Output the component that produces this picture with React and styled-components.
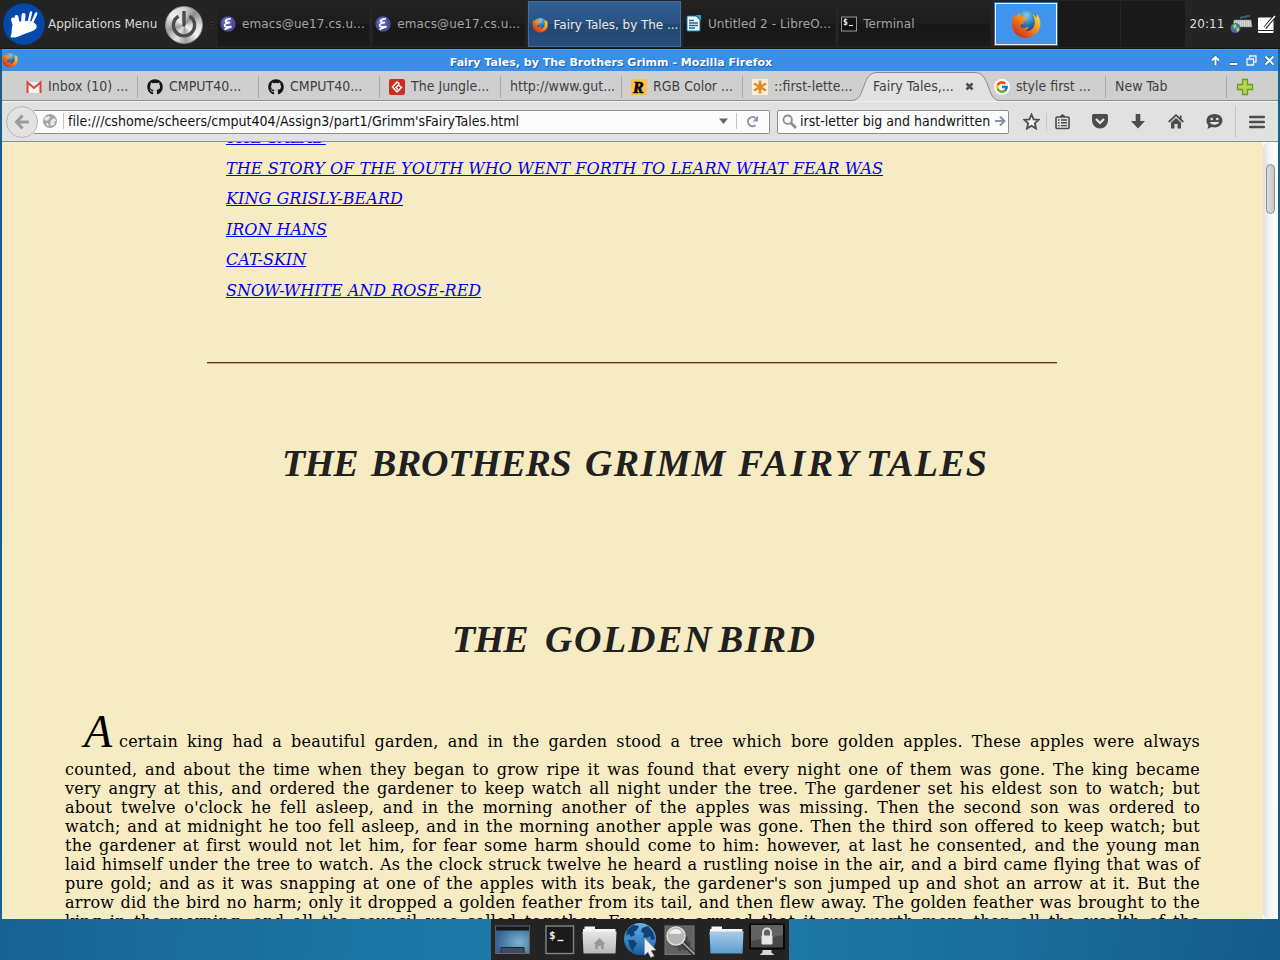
import React from 'react';
import styled, { createGlobalStyle, css } from 'styled-components';
import { FaGithub } from 'react-icons/fa';
import { FcGoogle } from 'react-icons/fc';

const Global = createGlobalStyle`
  * { box-sizing: border-box; }
  body { margin: 0; overflow: hidden; }
  svg { display: block; flex: none; }
`;

const ui = '"DejaVu Sans", sans-serif';
const uiNarrow = '"DejaVu Sans Condensed", "DejaVu Sans", sans-serif';

const Desktop = styled.div`
  width: 1280px;
  height: 960px;
  display: flex;
  flex-direction: column;
  overflow: hidden;
  background: linear-gradient(97deg, #155c8c 0%, #1d76a5 35%, #207aa8 60%, #1c719f 75%, #155b8a 100%);
`;

/* ---------- top panel ---------- */
const Panel = styled.div`
  height: 49px;
  flex: none;
  display: flex;
  align-items: center;
  background: #242424;
  border-bottom: 1px solid #141414;
  padding-left: 3px;
  font: 12px ${ui};
  color: #d8d8d8;
`;
const MenuButton = styled.div`
  display: flex;
  align-items: center;
  gap: 3px;
  width: 162px;
  white-space: nowrap;
  letter-spacing: -0.05px;
  svg { width: 42px; height: 42px; }
`;
const PowerButton = styled.div`
  width: 38px;
  height: 38px;
  border-radius: 50%;
  margin-top: 1px;
  border: 1px solid #8d8d8d;
  background: conic-gradient(#d5d5d5, #8c8c8c 12%, #dcdcdc 25%, #f4f4f4 36%, #a0a0a0 48%, #e4e4e4 58%, #9a9a9a 70%, #efefef 85%, #d5d5d5);
  display: flex;
  align-items: center;
  justify-content: center;
`;
const Grip = styled.div`
  width: 3px;
  height: 8px;
  margin: 0 4px 0 7px;
  background: repeating-linear-gradient(#161616 0 1px, #333 1px 3px);
`;
const TaskList = styled.div`
  display: flex;
  gap: 2px;
  align-self: stretch;
  padding: 1px 0;
`;
const Task = styled.div`
  width: 153.3px;
  height: 46px;
  display: flex;
  align-items: center;
  padding: 0 0 1px 2px;
  gap: 6px;
  white-space: nowrap;
  overflow: hidden;
  letter-spacing: 0.1px;
  color: #a3a3a3;
  background: linear-gradient(#222 0%, #1d1d1d 50%, #171717 50%, #1a1a1a 100%);
  border: 1px solid #202020;
  ${(p) => p.$active && css`
    color: #e6e9ec;
    padding: 1px 0 0 3px;
    letter-spacing: -0.05px;
    background: linear-gradient(#2f5f94 0%, #2a5282 50%, #24476f 50%, #294f7c 100%);
    border: 1px solid #3d6ea6;
  `}
`;
const Pager = styled.div`
  display: flex;
  align-self: stretch;
  margin-left: 4px;
  padding: 1px 0;
  gap: 1px;
`;
const Workspace = styled.div`
  width: ${(p) => p.$w || 62}px;
  height: 46px;
  background: #191919;
  display: flex;
  align-items: center;
  justify-content: center;
  ${(p) => p.$current && css`
    background: #3f94ee;
    border: 1px solid #f2f2f2;
    height: 42px;
    margin: 2px 0;
    outline: 1px solid #3a6797;
  `}
`;
const Clock = styled.div`
  width: 45px;
  padding-left: 4px;
  color: #dcdcdc;
  letter-spacing: 0.1px;
`;
const Tray = styled.div`
  display: flex;
  align-items: center;
  gap: 4px;
`;

/* ---------- window ---------- */
const Window = styled.div`
  width: 1276px;
  height: 870px;
  margin-left: 2px;
  display: flex;
  flex-direction: column;
  overflow: hidden;
  position: relative;
`;
const TitleBar = styled.div`
  height: 22px;
  flex: none;
  display: flex;
  align-items: center;
  background: #3a8ee8;
  border-top: 1px solid #4d9bef;
  > svg { margin-bottom: 2px; }
`;
const TitleText = styled.div`
  flex: 1;
  text-align: center;
  padding: 3px 0 0;
  font: bold 11px ${ui};
  color: #fff;
  text-shadow: 1px 1px 1px #1c5ea8;
  letter-spacing: 0.02px;
`;
const WindowButtons = styled.div`
  display: flex;
  width: 74px;
  gap: 5px;
  padding-left: 5px;
`;

const TabStrip = styled.div`
  height: 30px;
  flex: none;
  display: flex;
  background: #cfcfcf;
  border-bottom: 1px solid #8f8f8f;
  padding-left: 15px;
  position: relative;
`;
const TabItem = styled.div`
  width: 121px;
  height: 30px;
  display: flex;
  align-items: center;
  gap: 6px;
  padding: 1px 0 0 9px;
  font: 14px/19px ${uiNarrow};
  color: #3f3f3f;
  white-space: nowrap;
  position: relative;
  z-index: ${(p) => (p.$active ? 2 : 0)};
  background: ${(p) => (p.$line ? 'linear-gradient(#a9a9a9, #a9a9a9) right 5px / 1px 22px no-repeat' : 'none')};
`;
const TabLabel = styled.span`
  flex: 1;
`;
const CloseMark = styled.span`
  width: 20px;
  display: flex;
`;
const ActiveShape = styled.svg`
  position: absolute;
  left: 850px;
  top: 0;
  z-index: 1;
`;
const AddTab = styled.div`
  padding: 7px 0 0 9px;
`;

const NavBar = styled.div`
  height: 41px;
  flex: none;
  display: flex;
  align-items: center;
  background: #e1e1e1;
  border-top: 1px solid #f1f1f1;
  border-bottom: 1px solid #8f8f8f;
  padding-left: 4px;
`;
const BackButton = styled.div`
  width: 32px;
  height: 32px;
  border-radius: 50%;
  border: 1px solid #b4b4b4;
  background: #e2e2e2;
  display: flex;
  align-items: center;
  justify-content: center;
  flex: none;
  z-index: 1;
`;
const field = css`
  height: 24px;
  background: #fcfcfc;
  border: 1px solid #8e8e8e;
  display: flex;
  align-items: center;
  flex: none;
  font: 14px/18px ${uiNarrow};
  color: #111;
  white-space: nowrap;
`;
const UrlField = styled.div`
  ${field}
  width: 736px;
  margin-left: -4px;
  border-left: 0;
  border-radius: 0 2px 2px 0;
  padding: 0 10px 1px 9px;
`;
const Bar = styled.span`
  width: 1px;
  height: ${(p) => p.$h || 16}px;
  background: #c6c6c6;
  margin: 0 ${(p) => p.$r || 0}px 0 ${(p) => p.$l || 0}px;
  flex: none;
`;
const Address = styled.span`
  flex: 1;
  letter-spacing: 0.03px;
`;
const SearchField = styled.div`
  ${field}
  width: 232px;
  margin-left: 7px;
  border-radius: 2px;
  padding: 0 2px 1px 4px;
  gap: 3px;
`;
const SearchText = styled.span`
  flex: 1;
  min-width: 0;
`;
const Tools = styled.div`
  display: flex;
  align-items: center;
  margin-left: 14px;
`;
const ToolIcon = styled.span`
  width: 38px;
  display: flex;
  justify-content: center;
`;

/* ---------- page ---------- */
const View = styled.div`
  flex: 1;
  display: flex;
  overflow: hidden;
  background: #fff;
`;
const Page = styled.div`
  width: 1261px;
  height: 777px;
  overflow: hidden;
  background: #f7ebc4;
  font-family: "DejaVu Serif", serif;
  color: #000;
`;
const Contents = styled.div`
  margin: -19px 0 0 224px;
  display: flex;
  flex-direction: column;
  align-items: flex-start;
`;
const ContentsLink = styled.a`
  font: italic 16px/30.5px "DejaVu Serif", serif;
  letter-spacing: ${(p) => p.$ls || 0}px;
  color: #0000ee;
  text-decoration: underline;
  text-decoration-thickness: 1px;
  text-underline-offset: 1px;
  white-space: nowrap;
`;
const Rule = styled.div`
  width: 850px;
  height: 2px;
  margin: 56px 0 0 205px;
  background: #6b2f04;
  border-bottom: 1px solid #cda873;
`;
const Heading = styled.div`
  display: flex;
  margin: ${(p) => p.$top}px 0 0 ${(p) => p.$left}px;
  font: italic bold 38px/44px "Liberation Serif", serif;
  color: #212121;
`;
const Word = styled.span`
  width: ${(p) => p.$w}px;
  letter-spacing: ${(p) => p.$ls}px;
  white-space: nowrap;
`;
const Story = styled.div`
  margin: 52px 0 0 63px;
  width: 1135px;
`;
const Line = styled.div`
  font-size: 16px;
  line-height: 19px;
  height: 19px;
  letter-spacing: 0.22px;
  white-space: nowrap;
  text-align: justify;
  text-align-last: justify;
`;
const Opening = styled.div`
  display: flex;
  align-items: baseline;
  height: 47px;
  padding-left: 19px;
  ${Line} { flex: 1; }
`;
const Initial = styled.span`
  font: italic 46px/38px "Liberation Serif", serif;
  width: 35px;
`;

const ScrollTrack = styled.div`
  width: 15px;
  background: linear-gradient(90deg, #dedede, #f4f4f4 40%, #fff);
  padding: 22px 0 0 3px;
  border-radius: 6px 0 0 6px;
`;
const ScrollThumb = styled.div`
  width: 9px;
  height: 50px;
  border-radius: 5px;
  border: 1px solid #8b8b8b;
  background: linear-gradient(90deg, #dcdcdc, #c8c8c8);
`;

/* ---------- dock ---------- */
const Dock = styled.div`
  width: 298px;
  height: 41px;
  margin-left: 491px;
  flex: none;
  background: #242424;
  display: flex;
  align-items: center;
  padding: 1px 0 0 2px;
`;
const DockItem = styled.div`
  width: ${(p) => p.$w || 40}px;
  display: flex;
  justify-content: center;
`;

/* ---------- drawings ---------- */
const Firefox = ({ size = 16 }) => (
  <svg width={size} height={size} viewBox="0 0 32 32">
    <defs>
      <radialGradient id="ffBlue" cx=".5" cy=".2" r=".8"><stop offset="0" stopColor="#7fd0f5" /><stop offset=".5" stopColor="#2a72b8" /><stop offset="1" stopColor="#152a63" /></radialGradient>
      <linearGradient id="ffFire" x1="1" y1="0" x2=".1" y2="1"><stop offset="0" stopColor="#ffe95a" /><stop offset=".35" stopColor="#fba522" /><stop offset=".65" stopColor="#e8601c" /><stop offset="1" stopColor="#b9260f" /></linearGradient>
    </defs>
    <circle cx="16.5" cy="14.5" r="13" fill="url(#ffBlue)" />
    <path d="M27 5c4 4 5 9 4 14-1.600 7-8 12-15 12C7.500 31 1 24.500 1 16 1 11.500 2 8 3.500 5.500L5 8c1.500-2 3.500-3.200 5-4-.4 1.600 0 3 .7 4 2.300 0 5 .3 6.300 2-.4 1.700-2.600 2.500-3.700 3.400.3 1.200.2 2-.3 2.800-1.500-.3-3 .2-3 1.800 0 1.500 2 2.700 4 2.300 2-.4 3-1.700 4.500-1.100 1 .8-.8 3.300-3.200 4 5.700 1.200 10-3 10-8.500C25.300 11 25 8 23 5c1.800 1 3 2.500 4 4.500.5-1.500.5-3 0-4.500z" fill="url(#ffFire)" />
  </svg>
);
const Xfce = () => (
  <svg viewBox="0 0 42 42">
    <circle cx="21" cy="21" r="20.800" fill="#0548ab" />
    <path d="M10 21C14 18.500 24 17 29 19c4 1.500 6 3.500 4 6.500-3 3.500-10 4-15 7-4 2-10 3-10.500 1C9.500 30 8 25 10 21z" fill="#fff" />
    <path d="M10 16.500l2 6M13.500 14l1.500 8M20.500 12l-.5 9" stroke="#fff" strokeWidth="4" strokeLinecap="round" />
    <path d="M28 9.500L25.500 20M33.200 10.500L28.500 21" stroke="#fff" strokeWidth="2.500" strokeLinecap="round" />
  </svg>
);
const PowerGlyph = () => (
  <svg width="28" height="28" viewBox="0 0 28 28" fill="none" stroke="#4b4b4b" strokeWidth="3.400">
    <path d="M8.500 5.200a10.600 10.600 0 1 0 11 0" /><path d="M14 1v13" strokeLinecap="round" />
  </svg>
);
const Emacs = () => (
  <svg width="16" height="16" viewBox="0 0 16 16">
    <circle cx="8" cy="8" r="7.700" fill="#4c4b9e" /><circle cx="7" cy="6" r="5" fill="#7a79c5" opacity=".5" />
    <path d="M11 2.500C8 3 5 4 5.500 5.500c.3 1 2.200 1 4.500 1-2.500.5-5.500 1.300-5.500 3 0 1.500 3 1.600 7 1-2 1.300-5 1.500-7 3" fill="none" stroke="#fff" strokeWidth="1.700" />
  </svg>
);
const Writer = () => (
  <svg width="16" height="17" viewBox="0 0 16 17">
    <path d="M1 1h9l4 4v11H1z" fill="#f5fafc" stroke="#1a6c9c" /><path d="M9.500 0H15v5.500z" fill="#22a0d8" />
    <path d="M3 5.500h5M3 8h9M3 10.500h9M3 13h6" stroke="#116a9c" strokeWidth="1.300" />
  </svg>
);
const TermMini = () => (
  <svg width="16" height="16" viewBox="0 0 16 16">
    <rect x=".5" y="1" width="15" height="14" fill="#111" stroke="#999" />
    <text x="2" y="9" fontSize="8" fontWeight="bold" fontFamily="DejaVu Sans Mono" fill="#fff">$</text><path d="M8 9.500h4" stroke="#fff" />
  </svg>
);
const Keyboard = () => (
  <svg width="23" height="20" viewBox="0 0 23 20">
    <path d="M11 5c-1-3 3-1.500 5-2s-2-2 4-1" fill="none" stroke="#42678a" strokeWidth="1.500" />
    <path d="M4 6h17l1 7H3z" fill="#d9dbd3" stroke="#777" strokeWidth=".6" />
    <path d="M5 8h16M5 10h16M5 12h16" stroke="#9a9c94" strokeDasharray="1 1" />
    <circle cx="5.500" cy="14" r="5" fill="#3f70b4" /><path d="M3 11l3-1 1 3-3 2zM6 15l3-2v4l-2 1z" fill="#a9cf3c" />
  </svg>
);
const Note = () => (
  <svg width="19" height="19" viewBox="0 0 19 19">
    <rect x="1" y="2.500" width="15.500" height="15.500" rx="1" fill="#fff" /><path d="M1 15.500h15.500" stroke="#222" />
    <path d="M18 1l-7 8-3 4" stroke="#1e1e1e" strokeWidth="3.500" /><path d="M18 1l-7 8-3.500 4" stroke="#fff" strokeWidth="1.500" />
  </svg>
);
const Gmail = () => (
  <svg width="16" height="16" viewBox="0 0 16 16">
    <path d="M1 3h14v11H1z" fill="#f4f4f4" /><path d="M1.500 14V3.500L8 9l6.500-5.500V14" fill="none" stroke="#d84437" strokeWidth="2" />
  </svg>
);
const GitLogo = () => (
  <svg width="16" height="16" viewBox="0 0 16 16">
    <rect width="16" height="16" rx="2" fill="#cd2c20" />
    <path d="M10.500 5L8 3 3.500 8 8 13l4.500-4.500L9.500 6 7 8.500l2 2" fill="none" stroke="#fff" strokeWidth="1.500" />
  </svg>
);
const RIcon = () => (
  <svg width="16" height="16" viewBox="0 0 16 16">
    <rect width="16" height="16" fill="#ffbe45" />
    <text x="2" y="13.500" fontFamily="Liberation Serif" fontSize="16" fontWeight="bold" fontStyle="italic" stroke="#000" strokeWidth=".6">R</text>
  </svg>
);
const Star = () => (
  <svg width="16" height="16" viewBox="0 0 16 16">
    <rect width="16" height="16" fill="#faeedd" />
    <path d="M8 1.500v13M2 4.500l12 7M14 4.500l-12 7" stroke="#e28a2b" strokeWidth="2.600" />
  </svg>
);
const GoogleMark = () => (
  <svg width="16" height="16" viewBox="0 0 16 16"><circle cx="8" cy="8" r="8" fill="#fff" /><FcGoogle x="1" y="1" width="14" height="14" size={14} /></svg>
);
const Cross = () => (
  <svg width="9" height="9" viewBox="0 0 9 9"><path d="M1.500 1.500l6 6M7.500 1.500l-6 6" stroke="#4e4e4e" strokeWidth="2.500" /></svg>
);
const Plus = () => (
  <svg width="18" height="18" viewBox="0 0 18 18"><path d="M6.500 1.500h5v5h5v5h-5v5h-5v-5h-5v-5h5z" fill="#b6d84a" stroke="#6a982a" strokeWidth="1.300" /></svg>
);
const BackArrow = () => (
  <svg width="16" height="16" viewBox="0 0 16 16" fill="none" stroke="#9b9b9b" strokeWidth="3"><path d="M8.500 1.500L2.500 8l6 6.500M3 8h12" /></svg>
);
const Globe = () => (
  <svg width="14" height="14" viewBox="0 0 14 14">
    <circle cx="7" cy="7" r="6.600" fill="#a5a5a5" stroke="#8e8e8e" strokeWidth=".6" />
    <path d="M2 3l4-1 1 2-3 3-3-1zM8 6l4-2 1 3-2 1 1 2-3 2-2-2zM3 9l2 0 1 3-2 0z" fill="#e9e9e9" />
  </svg>
);
const Reload = () => (
  <svg width="13" height="13" viewBox="0 0 13 13"><path d="M9.500 10.200A4.600 4.600 0 1 1 9.500 3" fill="none" stroke="#8e9aa8" strokeWidth="2" /><path d="M12 .5v6H6.500z" fill="#8e9aa8" /></svg>
);
const Magnifier = () => (
  <svg width="15" height="15" viewBox="0 0 15 15" fill="none" stroke="#8b8b8b"><circle cx="5.700" cy="5.700" r="4.200" strokeWidth="1.800" /><path d="M9 9l5 5" strokeWidth="2.600" /></svg>
);
const GoArrow = () => (
  <svg width="12" height="12" viewBox="0 0 12 12" fill="none" stroke="#8193a8" strokeWidth="2"><path d="M1 6h9M6 1.500L10.500 6 6 10.500" /></svg>
);
const dark = '#4c4c4c';
const Bookmark = () => (
  <svg width="17" height="17" viewBox="0 0 17 17"><path d="M8.500 1.500l2.100 4.800 5.100.5-3.800 3.500 1.100 5.200-4.500-2.700L4 15.500l1.100-5.200L1.300 6.800l5.100-.5z" fill="#f0f0f0" stroke={dark} strokeWidth="1.800" /></svg>
);
const ListIcon = () => (
  <svg width="15" height="16" viewBox="0 0 15 16"><rect x="1" y="3" width="13" height="11.500" rx="1" fill="none" stroke={dark} strokeWidth="1.600" /><path d="M5 2.500L7.500 .5 10 2.500z" fill={dark} stroke={dark} /><path d="M3 6h1.500M6 6h6M3 8.800h1.500M6 8.800h6M3 11.600h1.500M6 11.600h6" stroke={dark} strokeWidth="1.400" /></svg>
);
const Pocket = () => (
  <svg width="16" height="15" viewBox="0 0 16 15"><path d="M1.500 0h13Q16 0 16 1.500V6c0 5-4 8.500-8 8.500S0 11 0 6V1.500Q0 0 1.500 0z" fill={dark} /><path d="M4 5l4 4 4-4" fill="none" stroke="#e8e8e8" strokeWidth="2.200" /></svg>
);
const Download = () => (
  <svg width="14" height="15" viewBox="0 0 14 15"><path d="M4.700 0h4.600v7H14l-7 7.500L0 7h4.700z" fill={dark} /></svg>
);
const Home = () => (
  <svg width="16" height="15" viewBox="0 0 16 15"><path d="M.7 8L8 1.200 15.300 8M12.700 1.500v4" fill="none" stroke={dark} strokeWidth="1.800" /><path d="M3 8.500l5-4.500 5 4.500v6H9.500V10h-3v4.500H3z" fill={dark} /></svg>
);
const Chat = () => (
  <svg width="17" height="16" viewBox="0 0 17 16"><path d="M8.500 0C13 0 16.500 2.800 16.500 6.500S13 13.500 8.500 13.500c-1 0-2-.1-3-.4L1.500 15l.8-3.600C1 10 .5 8.500.5 6.500.5 2.800 4 0 8.500 0z" fill={dark} /><circle cx="5.700" cy="5" r="1.300" fill="#e5e5e5" /><circle cx="11.300" cy="5" r="1.300" fill="#e5e5e5" /><path d="M3.800 8h9.400c-1.300 3.500-8.100 3.500-9.400 0z" fill="#e5e5e5" /></svg>
);
const Menu = () => (
  <svg width="16" height="14" viewBox="0 0 16 14"><path d="M1.200 2h13.600M1.200 7h13.600M1.200 12h13.600" stroke={dark} strokeWidth="2.600" strokeLinecap="round" /></svg>
);
const WinIcon = ({ children }) => (
  <svg width="13" height="13" viewBox="0 0 13 13" fill="none" stroke="#fff" strokeWidth="2">
    <g stroke="#1f5fa8" strokeWidth="3.600">{children}</g>{children}
  </svg>
);

const DesktopIcon = () => (
  <svg width="35" height="30" viewBox="0 0 35 30">
    <defs><radialGradient id="desk" cx=".7" cy=".6" r=".7"><stop offset="0" stopColor="#79b5c9" /><stop offset="1" stopColor="#345f99" /></radialGradient></defs>
    <rect x=".7" y="1" width="33.600" height="27.500" fill="url(#desk)" stroke="#656a70" /><path d="M1 1.500h33v4H1z" fill="#171717" /><path d="M6 28v-5.500h23V28" fill="#3c4d63" stroke="#20262e" />
  </svg>
);
const TermIcon = () => (
  <svg width="30" height="30" viewBox="0 0 30 30">
    <rect x="1" y="1" width="27.500" height="27.500" fill="#1b1b1b" stroke="#858585" strokeWidth="1.400" />
    <text x="4" y="14" fontSize="11" fontWeight="bold" fontFamily="DejaVu Sans Mono" fill="#eee">$</text><path d="M12.500 15.500h6" stroke="#eee" strokeWidth="1.400" />
  </svg>
);
const Folder = ({ top, bottom, home }) => (
  <svg width="35" height="30" viewBox="0 0 35 30">
    <defs><linearGradient id={home ? 'fg' : 'fb'} x1="0" y1="0" x2="0" y2="1"><stop offset="0" stopColor={top} /><stop offset="1" stopColor={bottom} /></linearGradient></defs>
    <path d="M1 7V4h1.500V1.500H13V4h20.500v4z" fill="#f7f7f7" /><path d="M.5 6.500h34L33.500 28.500h-32z" fill={`url(#${home ? 'fg' : 'fb'})`} />
    {home && <path d="M11.500 19L17.500 13l6 6h-1.700v5H19v-3h-3v3h-2.800v-5z" fill="#999" />}
  </svg>
);
const WebIcon = () => (
  <svg width="34" height="36" viewBox="0 0 34 36">
    <defs><linearGradient id="web" x1="0" y1="0" x2="0" y2="1"><stop offset="0" stopColor="#63b5e9" /><stop offset="1" stopColor="#175aa6" /></linearGradient></defs>
    <circle cx="17" cy="17" r="16" fill="url(#web)" />
    <path d="M4 8l6-5 6 1-2 4-3 2 1 3-4 2-2-3-3 2zM5 18l6 0 3 4-3 4-1 4-3-5zM19 6l6-2 5 6 2 7-4 1-1-4-3 2-4-1 1-4-3-1z" fill="#124273" />
    <path d="M21.500 16l11.500 12-5 .4 3.200 5.600-3.400 1.600-3-5.700-3.300 3.400z" fill="#eee" stroke="#888" strokeWidth=".5" />
  </svg>
);
const SearchIcon = () => (
  <svg width="33" height="31" viewBox="0 0 33 31">
    <rect x="1" y="1" width="29" height="28.500" fill="#626262" stroke="#777" /><circle cx="18" cy="18" r="7" fill="#484848" stroke="#484848" strokeWidth="3" strokeDasharray="3 3" />
    <path d="M18 17l12 12" stroke="#222" strokeWidth="4" /><path d="M18 17l12.500 12" stroke="#999" strokeWidth="2" />
    <circle cx="12" cy="11" r="9" fill="#b5b5b5" stroke="#dedede" strokeWidth="1.500" /><path d="M5 9a7 7 0 0 1 13-1c-4 2-8 0-13 1z" fill="#eee" />
  </svg>
);
const LockIcon = () => (
  <svg width="36" height="34" viewBox="0 0 36 34">
    <rect x="1" y="1.500" width="34" height="24" fill="#484848" stroke="#090909" strokeWidth="2" /><path d="M2 2h32v10L2 18z" fill="#626262" />
    <path d="M14 13V9.500a4 4 0 0 1 8 0V13" fill="none" stroke="#ddd" strokeWidth="2" /><rect x="12.500" y="12.500" width="11" height="9" rx="1" fill="#e6e6e6" />
    <path d="M13.500 27h9v2.500l3 2.500H10.500l3-2.500z" fill="#d8d8d8" />
  </svg>
);

const tasks = [
  { icon: <Emacs />, text: 'emacs@ue17.cs.u...' },
  { icon: <Emacs />, text: 'emacs@ue17.cs.u...' },
  { icon: <Firefox />, text: 'Fairy Tales, by The ...', active: true },
  { icon: <Writer />, text: 'Untitled 2 - LibreO...' },
  { icon: <TermMini />, text: 'Terminal' },
];
const tabs = [
  { icon: <Gmail />, text: 'Inbox (10) ...', line: true },
  { icon: <FaGithub size={16} color="#151515" />, text: 'CMPUT40...', line: true },
  { icon: <FaGithub size={16} color="#151515" />, text: 'CMPUT40...', line: true },
  { icon: <GitLogo />, text: 'The Jungle...', line: true },
  { text: 'http://www.gut...', line: true },
  { icon: <RIcon />, text: 'RGB Color ...', line: true },
  { icon: <Star />, text: '::first-lette...' },
  { text: 'Fairy Tales,...', active: true },
  { icon: <GoogleMark />, text: 'style first ...', line: true },
  { text: 'New Tab', line: true },
];
const links = [
  ['THE SALAD', 0.1],
  ['THE STORY OF THE YOUTH WHO WENT FORTH TO LEARN WHAT FEAR WAS', 0.06],
  ['KING GRISLY-BEARD', 0.06],
  ['IRON HANS', 0],
  ['CAT-SKIN', 0],
  ['SNOW-WHITE AND ROSE-RED', -0.02],
];
const story = [
  'counted, and about the time when they began to grow ripe it was found that every night one of them was gone. The king became',
  'very angry at this, and ordered the gardener to keep watch all night under the tree. The gardener set his eldest son to watch; but',
  "about twelve o'clock he fell asleep, and in the morning another of the apples was missing. Then the second son was ordered to",
  'watch; and at midnight he too fell asleep, and in the morning another apple was gone. Then the third son offered to keep watch; but',
  'the gardener at first would not let him, for fear some harm should come to him: however, at last he consented, and the young man',
  'laid himself under the tree to watch. As the clock struck twelve he heard a rustling noise in the air, and a bird came flying that was of',
  "pure gold; and as it was snapping at one of the apples with its beak, the gardener's son jumped up and shot an arrow at it. But the",
  'arrow did the bird no harm; only it dropped a golden feather from its tail, and then flew away. The golden feather was brought to the',
  'king in the morning, and all the council was called together. Everyone agreed that it was worth more than all the wealth of the',
];

export default function App() {
  return (
    <Desktop>
      <Global />
      <Panel>
        <MenuButton><Xfce />Applications Menu</MenuButton>
        <PowerButton><PowerGlyph /></PowerButton>
        <Grip />
        <TaskList>
          {tasks.map((t, i) => <Task key={i} $active={t.active}>{t.icon}{t.text}</Task>)}
        </TaskList>
        <Pager>
          <Workspace $current><Firefox size={30} /></Workspace>
          <Workspace />
          <Workspace $w={64} />
        </Pager>
        <Clock>20:11</Clock>
        <Tray><Keyboard /><Note /></Tray>
      </Panel>
      <Window>
        <TitleBar>
          <Firefox />
          <TitleText>Fairy Tales, by The Brothers Grimm - Mozilla Firefox</TitleText>
          <WindowButtons>
            <WinIcon><path d="M6.500 11V4M3 6.500L6.500 3 10 6.500" /></WinIcon>
            <WinIcon><path d="M3 10h7" /></WinIcon>
            <WinIcon><path d="M4.500 4V2H11v6H9M2 5h6.500v6H2z" strokeWidth="1.300" /></WinIcon>
            <WinIcon><path d="M2.500 2.500l8 8M10.500 2.500l-8 8" /></WinIcon>
          </WindowButtons>
        </TitleBar>
        <TabStrip>
          <ActiveShape width="148" height="30" viewBox="0 0 148 30">
            <path d="M0 29.500C14 29.500 9 1.500 25 1.500H123C139 1.500 134 29.500 148 29.500V31H0z" fill="#e1e1e1" />
            <path d="M0 29.500C14 29.500 9 1.500 25 1.500H123C139 1.500 134 29.500 148 29.500" fill="none" stroke="#8b8b8b" />
          </ActiveShape>
          {tabs.map((t, i) => (
            <TabItem key={i} $active={t.active} $line={t.line}>
              {t.icon}<TabLabel>{t.text}</TabLabel>{t.active && <CloseMark><Cross /></CloseMark>}
            </TabItem>
          ))}
          <AddTab><Plus /></AddTab>
        </TabStrip>
        <NavBar>
          <BackButton><BackArrow /></BackButton>
          <UrlField>
            <Globe /><Bar $l={6} $r={4} />
            <Address>file:///cshome/scheers/cmput404/Assign3/part1/Grimm'sFairyTales.html</Address>
            <svg width="9" height="6" viewBox="0 0 9 6"><path d="M0 .5h9L4.500 6z" fill="#666" /></svg>
            <Bar $l={8} $r={9} /><Reload />
          </UrlField>
          <SearchField><Magnifier /><SearchText>irst-letter big and handwritten</SearchText><GoArrow /></SearchField>
          <Tools>
            <Bookmark />
            <Bar $l={6} $r={-4} $h={18} />
            <ToolIcon><ListIcon /></ToolIcon>
            <ToolIcon><Pocket /></ToolIcon>
            <ToolIcon><Download /></ToolIcon>
            <ToolIcon><Home /></ToolIcon>
            <ToolIcon><Chat /></ToolIcon>
            <Bar $l={2} $r={13} $h={32} />
            <Menu />
          </Tools>
        </NavBar>
        <View>
          <Page>
            <Contents>
              {links.map(([t, ls]) => <ContentsLink key={t} $ls={ls}>{t}</ContentsLink>)}
            </Contents>
            <Rule />
            <Heading $top={77} $left={280}>
              <Word $w={89} $ls={-0.7}>THE</Word>
              <Word $w={214} $ls={-0.3}>BROTHERS</Word>
              <Word $w={153} $ls={1.3}>GRIMM</Word>
              <Word $w={128} $ls={2.6}>FAIRY</Word>
              <Word $w={122} $ls={1.2}>TALES</Word>
            </Heading>
            <Heading $top={132} $left={450}>
              <Word $w={93} $ls={-0.7}>THE</Word>
              <Word $w={173} $ls={1.6}>GOLDEN</Word>
              <Word $w={98} $ls={1.3}>BIRD</Word>
            </Heading>
            <Story>
              <Opening>
                <Initial>A</Initial>
                <Line>certain king had a beautiful garden, and in the garden stood a tree which bore golden apples. These apples were always</Line>
              </Opening>
              {story.map((t) => <Line key={t}>{t}</Line>)}
            </Story>
          </Page>
          <ScrollTrack><ScrollThumb /></ScrollTrack>
        </View>
      </Window>
      <Dock>
        <DockItem $w={38}><DesktopIcon /></DockItem>
        <DockItem $w={58}><TermIcon /></DockItem>
        <DockItem $w={20}><Folder home top="#e6e6e6" bottom="#b9b9b9" /></DockItem>
        <DockItem $w={62}><WebIcon /></DockItem>
        <DockItem $w={18}><SearchIcon /></DockItem>
        <DockItem $w={74}><Folder top="#a9cdea" bottom="#5a9bce" /></DockItem>
        <DockItem $w={8}><LockIcon /></DockItem>
      </Dock>
    </Desktop>
  );
}
